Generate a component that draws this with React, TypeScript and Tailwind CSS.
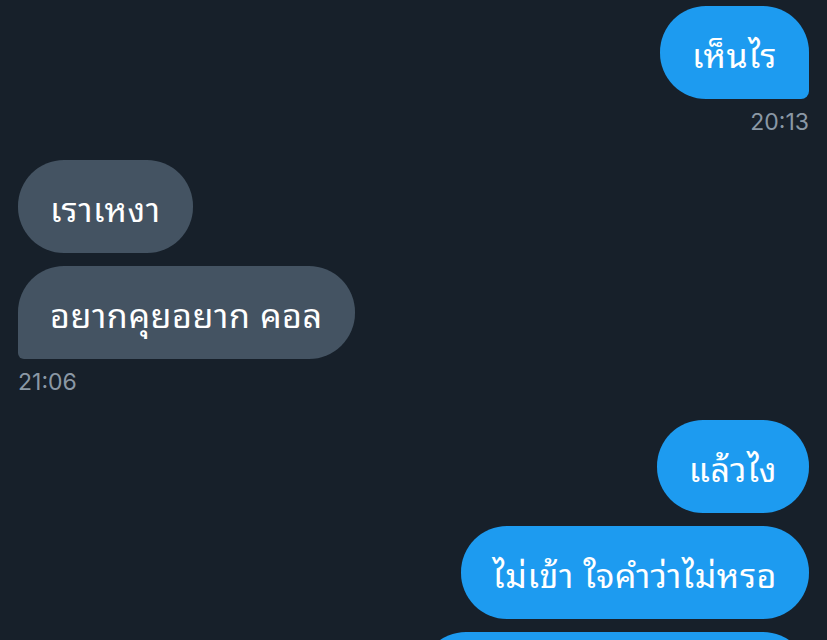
import React from "react";

const thai = {
  fontFamily: '"Noto Sans Thai Looped", "Noto Sans Thai", "Noto Sans", "DejaVu Sans", sans-serif',
};

function Bubble({
  text,
  side,
  corner,
}: {
  text: string;
  side: "me" | "them";
  corner: string;
}) {
  const color = side === "me" ? "bg-[#1d9bf0]" : "bg-[#445362]";
  return (
    <div
      className={`${color} ${corner} h-[93px] px-[32px] flex items-center text-white text-[34px] tracking-[0.6px] leading-none whitespace-nowrap`}
      style={thai}
    >
      {text}
    </div>
  );
}

function Time({ t, className }: { t: string; className: string }) {
  return (
    <div
      className={`text-[23px] leading-[26px] text-[#8b98a5] ${className}`}
      style={{ fontFamily: "Inter, Roboto, sans-serif" }}
    >
      {t}
    </div>
  );
}

export default function App() {
  return (
    <div className="w-[827px] h-[640px] overflow-hidden bg-[#17202a] px-[18px] pt-[6px]">
      <div className="flex flex-col items-end">
        <Bubble text="เห็นไร" side="me" corner="rounded-[46px] rounded-br-[8px]" />
        <Time t="20:13" className="mt-[10px]" />
      </div>
      <div className="flex flex-col items-start mt-[25px] gap-[13px]">
        <Bubble text="เราเหงา" side="them" corner="rounded-[46px]" />
        <Bubble text="อยากคุยอยาก คอล" side="them" corner="rounded-[46px] rounded-bl-[6px]" />
      </div>
      <Time t="21:06" className="mt-[10px]" />
      <div className="flex flex-col items-end mt-[25px] gap-[13px]">
        <Bubble text="แล้วไง" side="me" corner="rounded-[46px]" />
        <Bubble text="ไม่เข้า ใจคำว่าไม่หรอ" side="me" corner="rounded-[46px]" />
        <div className="bg-[#1d9bf0] rounded-[46px] h-[93px] w-[389px]" />
      </div>
    </div>
  );
}
